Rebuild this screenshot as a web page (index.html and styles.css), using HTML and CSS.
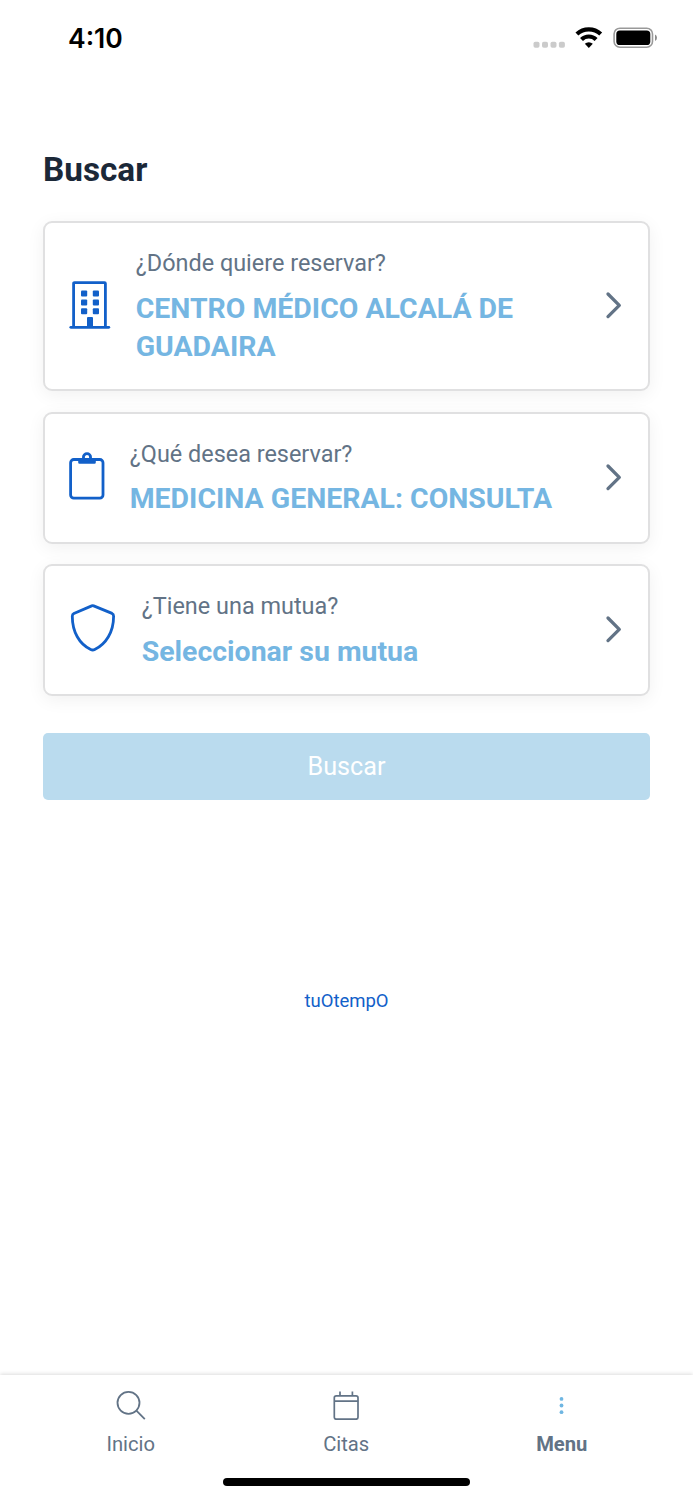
FILE: index.html
```html
<!DOCTYPE html>
<html lang="es">
<head>
<meta charset="utf-8">
<title>Buscar</title>
<link rel="stylesheet" href="styles.css">
</head>
<body>
<div class="screen">
  <header class="status">
    <span class="time">4:10</span>
    <svg class="indicators" width="126" height="24" viewBox="0 0 126 24">
      <g fill="#cbcbcb"><rect x="1.500" y="15.700" width="6" height="6" rx="1.800"/><rect x="10" y="15.700" width="6" height="6" rx="1.800"/><rect x="18.500" y="15.700" width="6" height="6" rx="1.800"/><rect x="26.900" y="15.700" width="6" height="6" rx="1.800"/></g>
      <g fill="none" stroke="#000" stroke-width="4.200"><path d="M44.900 8.100a17.300 17.300 0 0 1 23.800 0"/><path d="M49.500 13.500a10.400 10.400 0 0 1 14.600 0"/></g>
      <path d="M56.800 22l-4-4.200a5.800 5.800 0 0 1 8 0z"/>
      <rect x="82.100" y="2.200" width="38.400" height="19" rx="5.800" fill="none" stroke="#999" stroke-width="1.600"/>
      <rect x="84.300" y="4.400" width="34" height="14.600" rx="3.600"/>
      <path d="M123 8.600q2 1 2 3.200t-2 3.200z" fill="#8c8c8c"/>
    </svg>
  </header>
  <main>
    <h1>Buscar</h1>
    <div class="cards">
      <section class="card">
        <svg class="icon" width="42" height="48" viewBox="0 0 42 48">
          <path d="M4.600 46V2.500q0-.9.900-.9h30q.9 0 .9.900V46" fill="none" stroke="#1260c9" stroke-width="2.800"/>
          <path d="M1.800 46.300h38" stroke="#1260c9" stroke-width="2.800" stroke-linecap="round"/>
          <g fill="#1260c9"><rect x="12" y="9.500" width="6.200" height="6" rx="1"/><rect x="23.800" y="9.500" width="6.200" height="6" rx="1"/><rect x="12" y="18.500" width="6.200" height="6" rx="1"/><rect x="23.800" y="18.500" width="6.200" height="6" rx="1"/><rect x="12" y="27.300" width="6.200" height="6" rx="1"/><rect x="23.800" y="27.300" width="6.200" height="6" rx="1"/><path d="M18 46v-9q0-1 1-1h4q1 0 1 1v9z"/></g>
        </svg>
        <div class="copy"><span class="label">¿Dónde quiere reservar?</span><strong class="value">CENTRO MÉDICO ALCALÁ DE<br>GUADAIRA</strong></div>
        <svg class="chevron" width="18" height="28" viewBox="0 0 18 28"><path d="M3 3l11.300 11.300L3 25.600"/></svg>
      </section>
      <section class="card">
        <svg class="icon" width="36" height="48" viewBox="0 0 36 48" fill="none" stroke="#1260c9" stroke-width="2.800">
          <rect x="1.600" y="7.500" width="32.400" height="38.700" rx="3.200"/>
          <circle cx="18" cy="5.200" r="3.600"/>
          <path d="M9.200 7h5l2 1.500h3.600L21.800 7h5v3.500q0 1.300-1.300 1.300h-15q-1.300 0-1.300-1.300z" fill="#1260c9" stroke="none"/>
        </svg>
        <div class="copy"><span class="label">¿Qué desea reservar?</span><strong class="value">MEDICINA GENERAL: CONSULTA</strong></div>
        <svg class="chevron" width="18" height="28" viewBox="0 0 18 28"><path d="M3 3l11.300 11.300L3 25.600"/></svg>
      </section>
      <section class="card">
        <svg class="icon" width="48" height="48" viewBox="0 0 48 48">
          <path d="M22.700 1.900q1-.4 2 0L43 9.400q1.600.8 1.600 2.800C44.600 28 37 40 25.700 45.500q-2 1-4 0C10.400 40 3.300 28 3.300 12.200q0-2 1.600-2.800z" fill="none" stroke="#1260c9" stroke-width="2.800"/>
        </svg>
        <div class="copy"><span class="label">¿Tiene una mutua?</span><strong class="value">Seleccionar su mutua</strong></div>
        <svg class="chevron" width="18" height="28" viewBox="0 0 18 28"><path d="M3 3l11.300 11.300L3 25.600"/></svg>
      </section>
    </div>
    <button class="submit">Buscar</button>
    <a class="brand">tuOtempO</a>
  </main>
  <nav class="tabs">
    <div class="tab">
      <svg width="30" height="30" viewBox="0 0 30 30" fill="none" stroke="#627386" stroke-width="1.800"><circle cx="12.500" cy="12.800" r="11"/><path d="M20.400 20.700l8.400 8.400"/></svg>
      <span>Inicio</span>
    </div>
    <div class="tab">
      <svg width="30" height="30" viewBox="0 0 30 30" fill="none" stroke="#627386" stroke-width="1.700"><rect x="3.300" y="5.800" width="23.700" height="23.400" rx="2"/><path d="M3.200 11.100h24M9 1.400v4.500M21.400 1.400v4.500"/></svg>
      <span>Citas</span>
    </div>
    <div class="tab active">
      <svg width="30" height="30" viewBox="0 0 30 30" fill="#6fb6e2"><circle cx="14.500" cy="8.900" r="1.900"/><circle cx="14.500" cy="15.500" r="1.900"/><circle cx="14.500" cy="22.200" r="1.900"/></svg>
      <span>Menu</span>
    </div>
  </nav>
  <div class="home"></div>
</div>
</body>
</html>
```
FILE: styles.css
```css
* { box-sizing: border-box; }
body { margin: 0; background: #fff; font-family: Roboto, sans-serif; }
.screen { width: 693px; height: 1500px; display: flex; flex-direction: column; overflow: hidden; }
.status { height: 141px; padding: 22px 35px 0 68px; display: flex; justify-content: space-between; align-items: flex-start; }
.time { font: 600 26.500px/32px Inter, sans-serif; color: #000; }
.indicators { margin-top: 4px; }
main { flex: 1; padding: 0 43px; display: flex; flex-direction: column; }
h1 { margin: 9px 0 31px; font-size: 33.300px; line-height: 40px; font-weight: 700; color: #1b2838; }
.cards { display: flex; flex-direction: column; gap: 20.200px; }
.card { display: flex; align-items: center; padding: 24px 25.500px 23.800px 24px; border: 2px solid #e0e0e1; border-radius: 9px; background: #fff; box-shadow: 0 4px 18px rgba(0, 0, 0, .06); }
.icon { flex: none; margin: 0 24.700px 3px 0; }
.copy { flex: 1; display: flex; flex-direction: column; gap: 10.700px; margin-bottom: -1px; white-space: nowrap; }
.label { font-size: 23.430px; line-height: 32px; color: #627386; }
.value { font-size: 28.450px; line-height: 38.500px; font-weight: 700; color: #75b6e2; }
.chevron { flex: none; margin-bottom: 2.500px; fill: none; stroke: #627386; stroke-width: 3.300; stroke-linecap: round; stroke-linejoin: round; }
.submit { margin-top: 37.300px; height: 67px; padding: 0; border: 0; border-radius: 5px; background: #badbee; color: #fff; font: 400 25.200px/67px Roboto, sans-serif; }
.brand { margin-top: 189px; text-align: center; font-size: 18.500px; line-height: 24px; color: #1260c9; }
.tabs { height: 125px; padding: 15px 23.500px 0 23px; display: grid; grid-template-columns: repeat(3, 1fr); background: #fff; box-shadow: 0 -1px 4px rgba(0, 0, 0, .14); }
.tab { display: flex; flex-direction: column; align-items: center; gap: 12px; font-size: 20.200px; line-height: 24px; color: #627386; }
.active { font-weight: 700; }
.home { position: absolute; left: 223px; top: 1478px; width: 247px; height: 8px; border-radius: 4px; background: #000; }
```
